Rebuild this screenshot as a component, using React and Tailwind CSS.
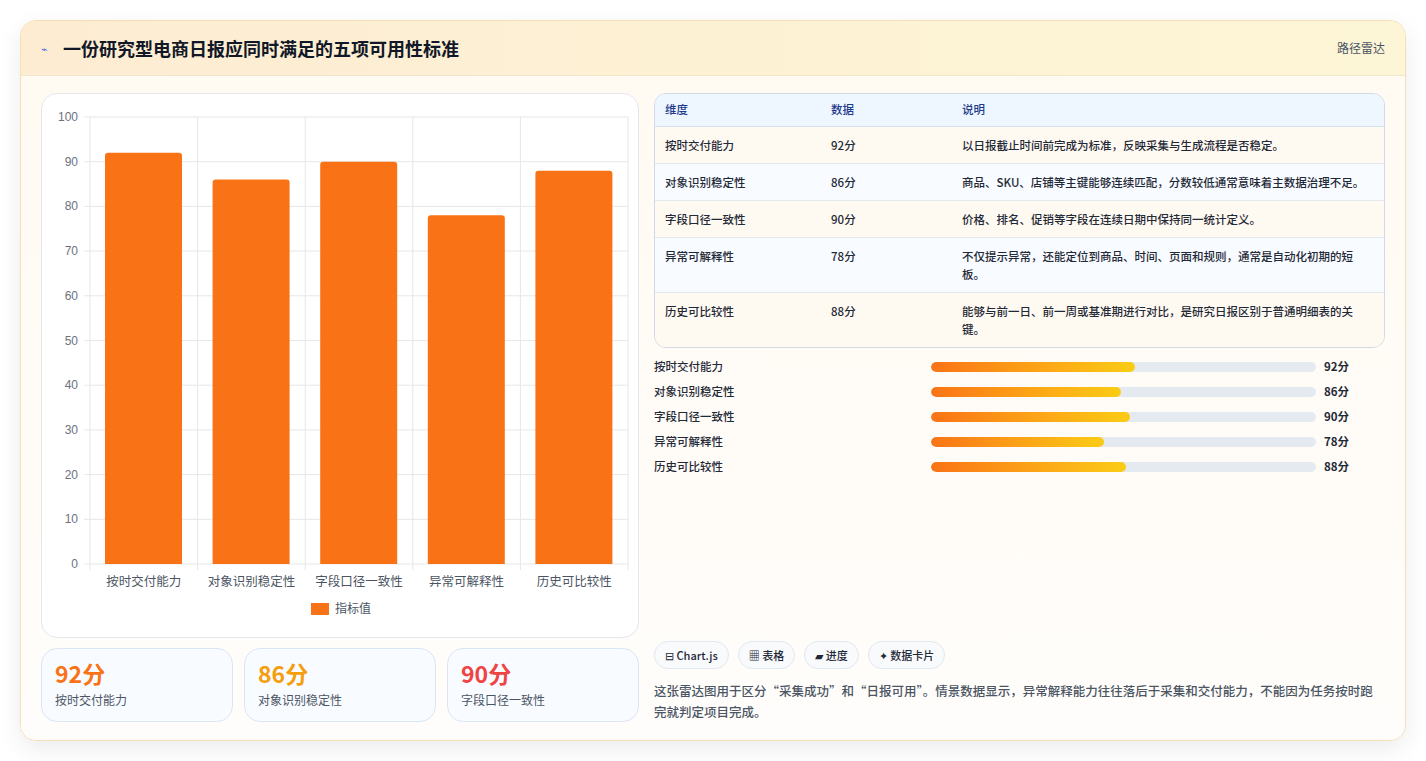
import React from "react";

const data = [
  { n: "按时交付能力", v: 92, w: 204, d: "以日报截止时间前完成为标准，反映采集与生成流程是否稳定。" },
  { n: "对象识别稳定性", v: 86, w: 190, d: "商品、SKU、店铺等主键能够连续匹配，分数较低通常意味着主数据治理不足。" },
  { n: "字段口径一致性", v: 90, w: 199, d: "价格、排名、促销等字段在连续日期中保持同一统计定义。" },
  { n: "异常可解释性", v: 78, w: 173, d: "不仅提示异常，还能定位到商品、时间、页面和规则，通常是自动化初期的短板。" },
  { n: "历史可比较性", v: 88, w: 195, d: "能够与前一日、前一周或基准期进行对比，是研究日报区别于普通明细表的关键。" },
];

function Chart() {
  const x0 = 48, x1 = 586, y0 = 470, yT = 23;
  const py = (v) => y0 - ((y0 - yT) * v) / 100;
  const cw = (x1 - x0) / 5;
  return (
    <svg width="596" height="542" style={{ fontFamily: "'Liberation Sans','Noto Sans CJK SC',sans-serif" }}>
      {[0, 10, 20, 30, 40, 50, 60, 70, 80, 90, 100].map((t) => (
        <g key={t}>
          <line x1={x0 - 6} x2={x1} y1={py(t)} y2={py(t)} stroke="#e5e7eb" />
          <text x={x0 - 12} y={py(t) + 4} textAnchor="end" fontSize="12" fill="#6b7280">{t}</text>
        </g>
      ))}
      {[0, 1, 2, 3, 4, 5].map((i) => (
        <line key={i} x1={x0 + cw * i} x2={x0 + cw * i} y1={yT} y2={y0 + 6} stroke="#e5e7eb" />
      ))}
      {data.map((d, i) => (
        <g key={d.n}>
          <path d={`M${x0 + cw * i + 15} ${y0} V${py(d.v) + 3} q0 -3 3 -3 h71 q3 0 3 3 V${y0} Z`} fill="#f97316" />
          <text x={x0 + cw * i + cw / 2} y={y0 + 22} textAnchor="middle" fontSize="12.5" fill="#4b5563">{d.n}</text>
        </g>
      ))}
      <rect x="269" y="509" width="18" height="12" fill="#f97316" />
      <text x="293" y="519" fontSize="12" fill="#4b5563">指标值</text>
    </svg>
  );
}

export default function App() {
  return (
    <div className="min-h-[761px] bg-white px-5 pt-5 pb-5" style={{ fontFamily: "'Noto Sans CJK SC','Noto Sans',sans-serif" }}>
      <div className="rounded-2xl border border-[#f6dfb8] bg-[#fffdf9] shadow-[0_8px_24px_rgba(0,0,0,0.08)] overflow-hidden">
        <div className="h-[55px] flex items-center justify-between px-5 bg-gradient-to-r from-[#fdecd2] to-[#fdf6d6] border-b border-[#f3e6cf]">
          <div className="flex items-center gap-2">
            <span className="text-[11px] text-[#4f6bd8] w-[14px]">⌁</span>
            <h1 className="text-[18px] font-bold text-[#111827]">一份研究型电商日报应同时满足的五项可用性标准</h1>
          </div>
          <span className="text-[12px] text-[#4b5563]">路径雷达</span>
        </div>
        <div className="flex gap-[15px] px-5 pt-[17px] pb-[18px] bg-gradient-to-b from-[#fffaf2] to-[#fffdfb]">
          <div className="w-[598px] flex flex-col gap-[10px]">
            <div className="h-[545px] rounded-2xl border border-[#e5e7eb] bg-white">
              <Chart />
            </div>
            <div className="grid grid-cols-3 gap-[11px]">
              {[["92分", "text-[#f97316]", "按时交付能力"], ["86分", "text-[#f59e0b]", "对象识别稳定性"], ["90分", "text-[#ef4444]", "字段口径一致性"]].map(([v, c, l]) => (
                <div key={l} className="h-[74px] rounded-2xl border border-[#dbe6f5] bg-[#f8fbff] px-[13px] pt-[8px]">
                  <div className={`text-[23px] font-bold leading-[32px] ${c}`}>{v}</div>
                  <div className="text-[12px] text-[#4b5563] mt-[2px]">{l}</div>
                </div>
              ))}
            </div>
          </div>
          <div className="flex-1 flex flex-col">
            <div className="rounded-xl border border-[#d1d9e6] overflow-hidden text-[11.5px] text-[#1f2937]">
              <div className="flex h-[33px] items-center bg-[#eef6ff] text-[#1e3a8a] font-medium border-b border-[#d6e2f0]">
                <div className="w-[176px] pl-[10px]">维度</div>
                <div className="w-[131px]">数据</div>
                <div className="flex-1">说明</div>
              </div>
              {data.map((d, i) => (
                <div key={d.n} className={`flex py-[9px] leading-[18px] border-b border-[#e3e8ef] last:border-b-0 ${i % 2 === 0 ? "bg-[#fffaf1]" : "bg-[#f8fbff]"}`}>
                  <div className="w-[176px] pl-[10px] font-medium">{d.n}</div>
                  <div className="w-[131px] font-medium">{d.v}分</div>
                  <div className="flex-1 pr-[14px] font-medium">{d.d}</div>
                </div>
              ))}
            </div>
            <div className="mt-[10px] flex flex-col gap-[7px]">
              {data.map((d) => (
                <div key={d.n} className="flex items-center h-[18px] text-[11.5px] font-medium text-[#1f2937]">
                  <div className="w-[277px]">{d.n}</div>
                  <div className="w-[385px] h-[10px] rounded-full bg-[#e5e9f0] overflow-hidden">
                    <div className="h-full rounded-full bg-gradient-to-r from-[#f97316] to-[#facc15]" style={{ width: d.w }} />
                  </div>
                  <div className="ml-[8px] font-bold">{d.v}分</div>
                </div>
              ))}
            </div>
            <div className="flex-1" />
            <div className="flex gap-[9px] text-[11px] font-medium text-[#1f2937]">
              {["⊟ Chart.js", "▦ 表格", "▰ 进度", "✦ 数据卡片"].map((c) => (
                <span key={c} className="h-[28px] flex items-center px-[10px] rounded-full border border-[#e2e8f0] bg-[#f8fafc]">{c}</span>
              ))}
            </div>
            <p className="mt-[11px] text-[12.5px] leading-[21px] text-[#4b5563] font-medium">这张雷达图用于区分“采集成功”和“日报可用”。情景数据显示，异常解释能力往往落后于采集和交付能力，不能因为任务按时跑完就判定项目完成。</p>
          </div>
        </div>
      </div>
    </div>
  );
}
